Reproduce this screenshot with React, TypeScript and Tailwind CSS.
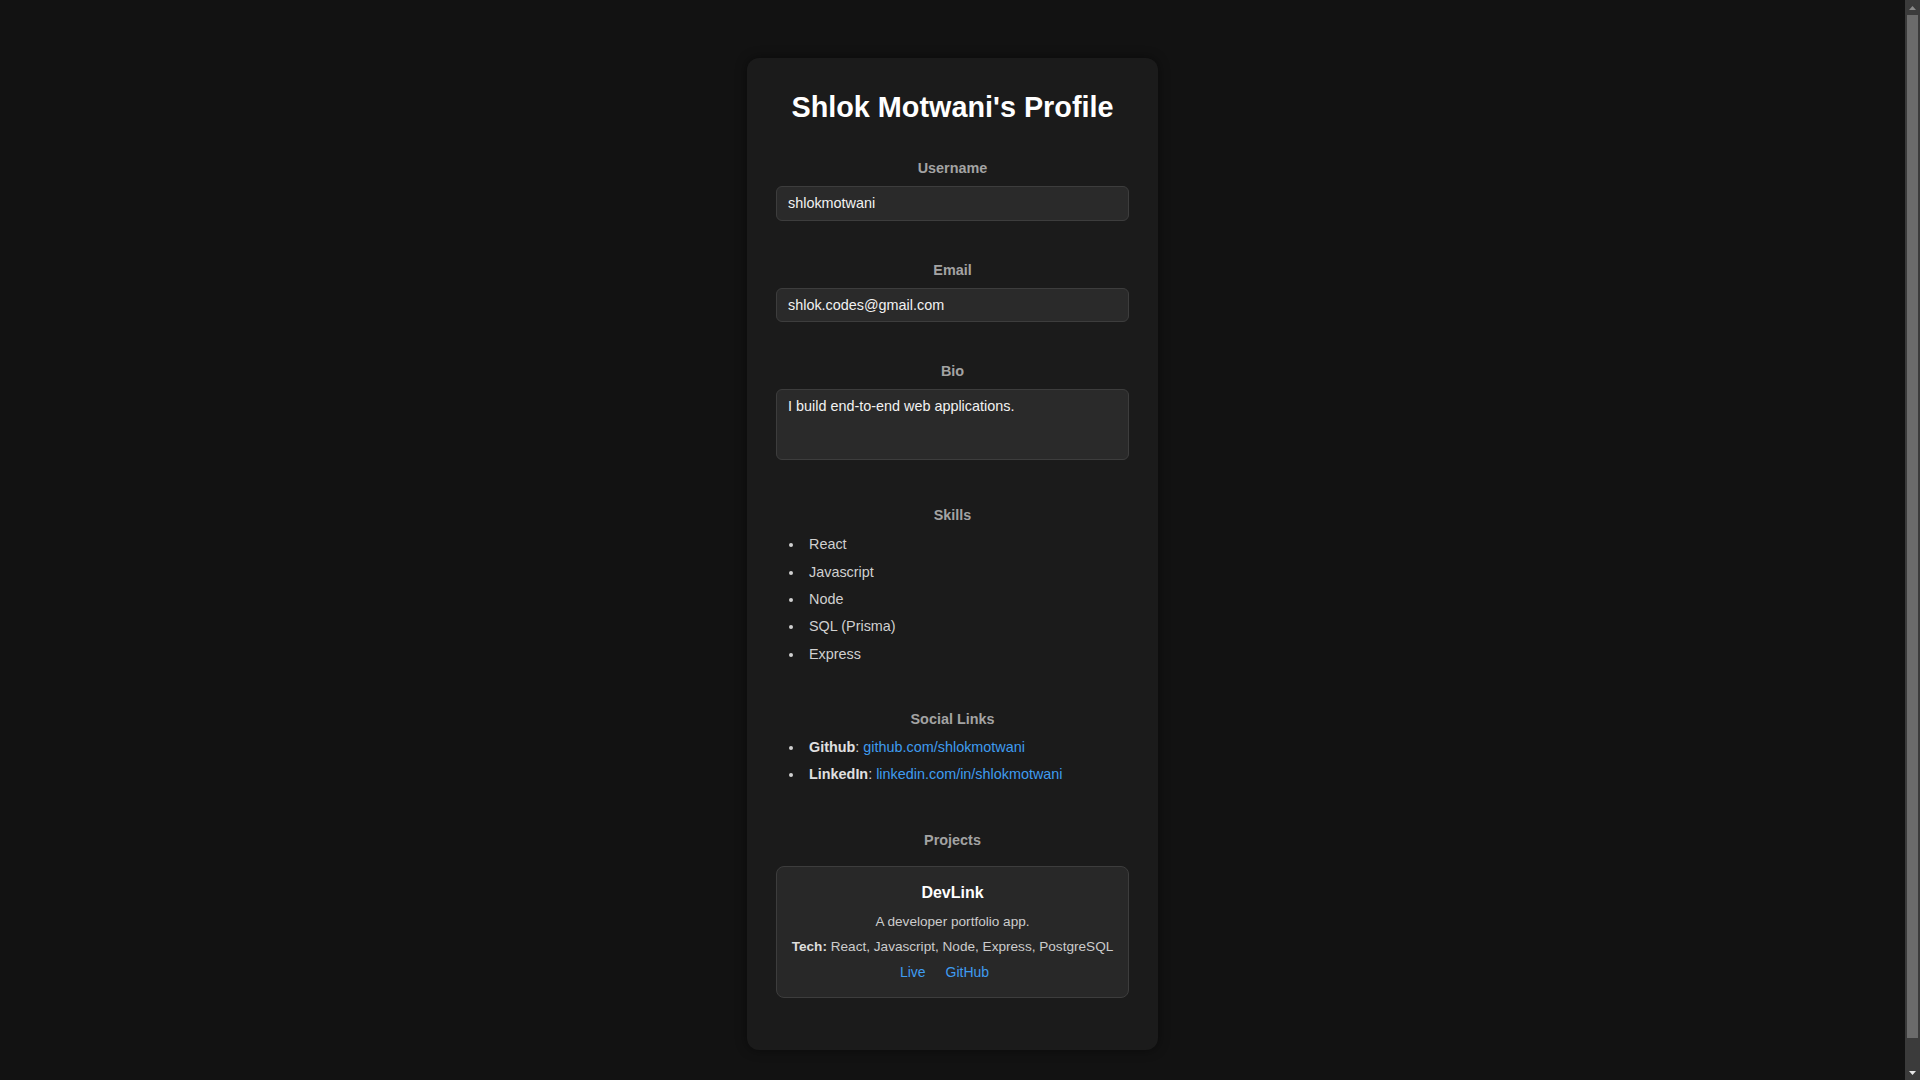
import React from "react"

const skills = ["React", "Javascript", "Node", "SQL (Prisma)", "Express"]

const Label = ({ children, className = "" }: { children: React.ReactNode; className?: string }) => (
	<label className={`block text-center text-[14.4px] leading-[16.5px] font-bold text-[#a3a3a3] ${className}`}>{children}</label>
)

const inputCls =
	"block w-full rounded-[6px] border border-[#3d3d3d] bg-[#2a2a2a] px-[11px] py-[8px] text-[14.4px] leading-[16.5px] text-[#f2f2f2] outline-none"

export default function App() {
	return (
		<div className="flex h-screen bg-[#121212] font-['Liberation_Sans',Arial,sans-serif]">
			<div className="flex-1 overflow-y-auto [scrollbar-width:none]">
				<div className="mx-auto mt-[58px] mb-[58px] w-[411px] rounded-[12px] bg-[#1b1b1b] px-[29px] pt-[33px] pb-[52px] shadow-[0_0_12px_rgba(0,0,0,0.45)]">
					<h1 className="text-center text-[28.8px] leading-[33px] font-bold text-white">Shlok Motwani's Profile</h1>

					{/* Username */}
					<Label className="mt-[36px]">Username</Label>
					<input className={`${inputCls} mt-[9.5px]`} defaultValue="shlokmotwani" />

					{/* Email */}
					<Label className="mt-[41.5px]">Email</Label>
					<input className={`${inputCls} mt-[9px]`} defaultValue="shlok.codes@gmail.com" />

					{/* Bio */}
					<Label className="mt-[40.5px]">Bio</Label>
					<textarea
						className={`${inputCls} mt-[10.3px] h-[71px] resize-none`}
						defaultValue="I build end-to-end web applications."
					/>

					{/* Skills */}
					<Label className="mt-[47px]">Skills</Label>
					<ul className="mt-[7.4px] list-disc pl-[28px] text-[14.4px] leading-[27.4px] text-[#d0d0d0]">
						{skills.map((s) => (
							<li key={s} className="pl-[5px]">{s}</li>
						))}
					</ul>

					{/* Social links */}
					<Label className="mt-[42.4px]">Social Links</Label>
					<ul className="mt-[6.8px] list-disc pl-[28px] text-[14.4px] leading-[27.4px] text-[#d0d0d0]">
						<li className="pl-[5px]">
							<strong className="text-[#e0e0e0]">Github</strong>:{" "}
							<a href="#" className="text-[#3f9cf0]">github.com/shlokmotwani</a>
						</li>
						<li className="pl-[5px]">
							<strong className="text-[#e0e0e0]">LinkedIn</strong>:{" "}
							<a href="#" className="text-[#3f9cf0]">linkedin.com/in/shlokmotwani</a>
						</li>
					</ul>

					{/* Projects */}
					<Label className="mt-[43.6px]">Projects</Label>
					<div className="mt-[17.2px] rounded-[8px] border border-[#3d3d3d] bg-[#282828] px-3 pt-[17px] pb-[17.2px] text-center">
						<h3 className="text-[16px] leading-[18.4px] font-bold text-white">DevLink</h3>
						<p className="mt-[11.7px] text-[13.6px] leading-[15.6px] text-[#cccccc]">A developer portfolio app.</p>
						<p className="mt-[9.7px] text-[13.6px] leading-[15.6px] text-[#cccccc]">
							<strong className="text-[#dddddd]">Tech:</strong> React, Javascript, Node, Express, PostgreSQL
						</p>
						<div className="mt-[9px] text-[14px] leading-[16px]">
							<a href="#" className="mr-4 text-[#3f9cf0]">Live</a>{" "}
							<a href="#" className="mr-4 text-[#3f9cf0]">GitHub</a>
						</div>
					</div>
				</div>
			</div>

			{/* scrollbar strip */}
			<div className="flex w-[15px] flex-col bg-[#3b3b3b]">
				<div className="flex h-[15px] items-center justify-center">
					<svg width="7" height="4" viewBox="0 0 7 4"><path d="M0 4 L3.5 0 L7 4 Z" fill="#8a8a8a" /></svg>
				</div>
				<div className="mx-[2px] h-[1023px] bg-[#6b6b6b]" />
				<div className="flex-1" />
				<div className="flex h-[15px] items-center justify-center">
					<svg width="7" height="4" viewBox="0 0 7 4"><path d="M0 0 L7 0 L3.5 4 Z" fill="#e6e6e6" /></svg>
				</div>
			</div>
		</div>
	)
}
